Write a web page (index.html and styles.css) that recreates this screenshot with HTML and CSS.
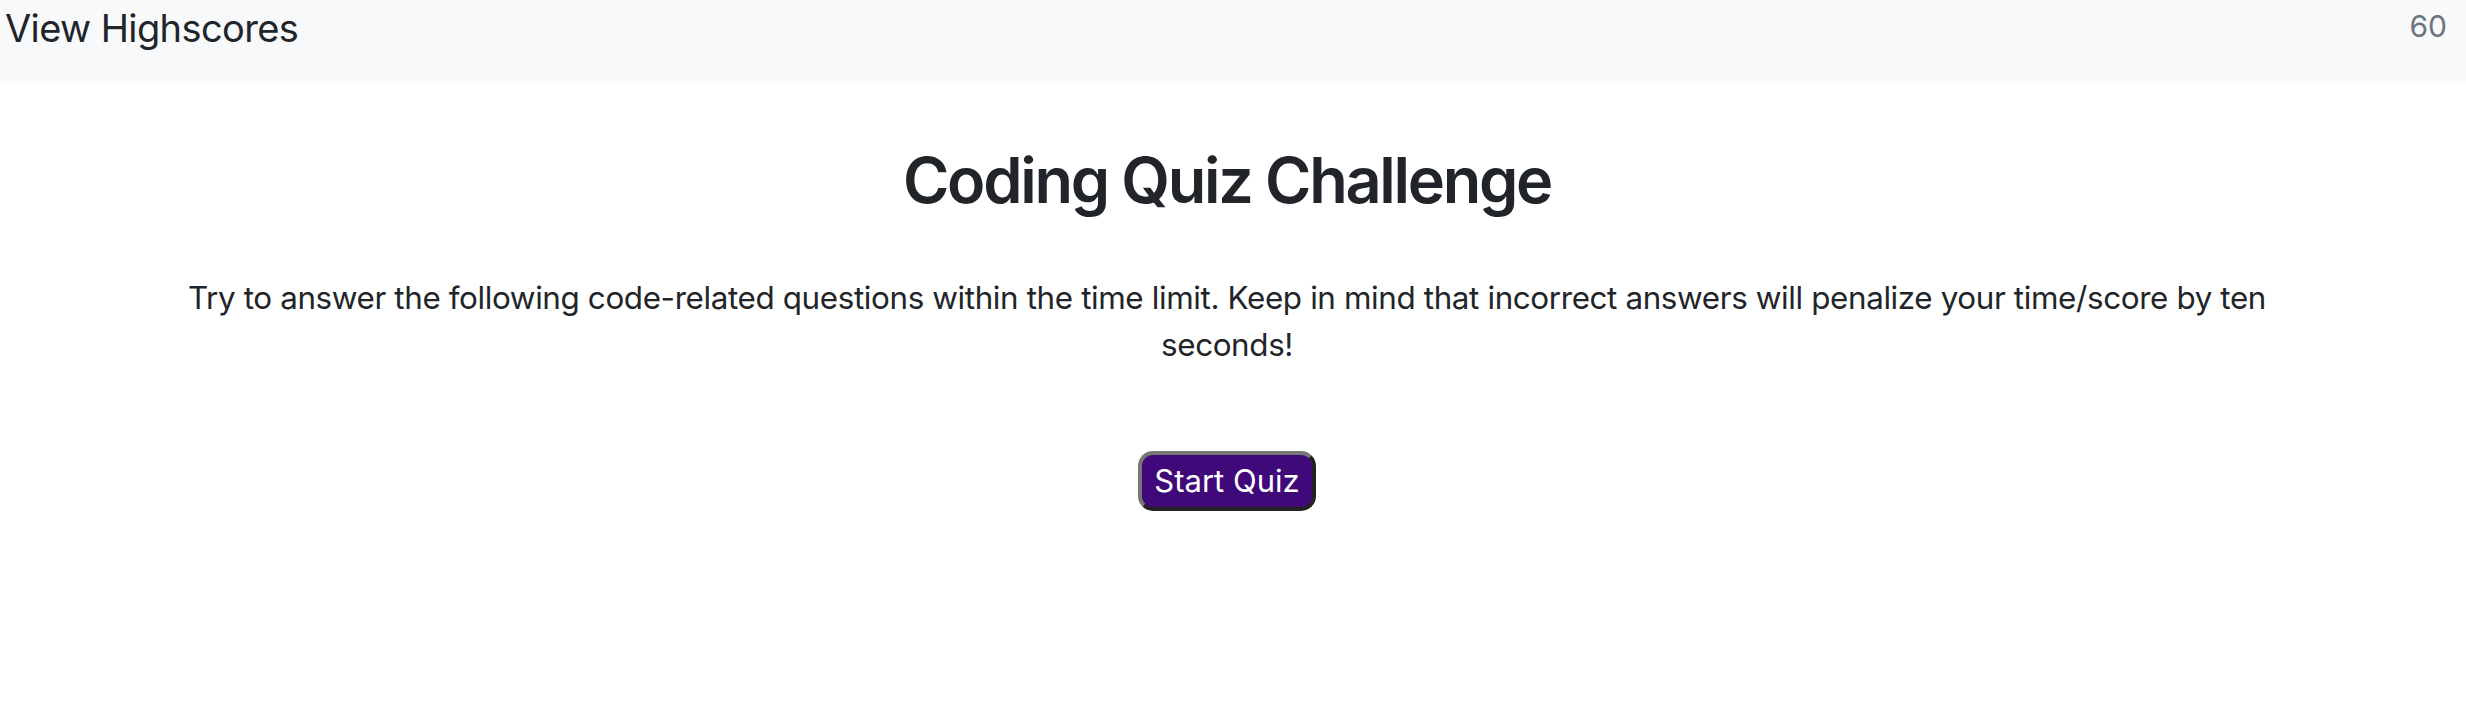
FILE: index.html
```html
<!DOCTYPE html>
<html lang="en">
<head>
<meta charset="utf-8">
<title>Coding Quiz Challenge</title>
<link rel="stylesheet" href="styles.css">
</head>
<body>
<header class="topbar">
  <a class="brand" href="#">View Highscores</a>
  <span class="timer">60</span>
</header>
<main class="intro">
  <h1 class="title">Coding Quiz Challenge</h1>
  <p class="lead">Try to answer the following code-related questions within the time limit. Keep in mind that incorrect answers will penalize your time/score by ten seconds!</p>
  <button class="start-btn" type="button">Start Quiz</button>
</main>
</body>
</html>
```
FILE: styles.css
```css
html, body {
  margin: 0;
  padding: 0;
  background: #fff;
  font-family: Inter, "Noto Sans", "Liberation Sans", sans-serif;
  color: #212529;
}

.topbar {
  height: 81px;
  background: #f8f9fa;
  display: flex;
  justify-content: space-between;
  align-items: flex-start;
  padding: 0 19px 0 5px;
}

.brand {
  font-size: 38px;
  line-height: 1;
  letter-spacing: -0.6px;
  color: #212529;
  text-decoration: none;
  padding-top: 9px;
}

.timer {
  font-size: 30px;
  line-height: 1;
  color: #6c757d;
  padding-top: 11px;
}

.intro {
  display: flex;
  flex-direction: column;
  align-items: center;
  padding: 0 12px 0 0;
  text-align: center;
}

.title {
  font-size: 63px;
  font-weight: 560;
  line-height: 1.2;
  letter-spacing: -2.3px;
  margin: 62px 0 0;
}

.lead {
  font-size: 31.4px;
  line-height: 1.5;
  font-weight: 400;
  letter-spacing: -0.38px;
  max-width: 2090px;
  margin: 56px 0 0;
}

.start-btn {
  margin-top: 82px;
  font-family: Inter, "Noto Sans", "Liberation Sans", sans-serif;
  font-size: 31px;
  line-height: 1.2;
  color: #fff;
  background: #40097a;
  border-width: 4px;
  border-style: solid;
  border-color: #777 #222 #222 #777;
  border-radius: 15px;
  padding: 6px 12px 6px 12px;
  height: 60px;
}
```
